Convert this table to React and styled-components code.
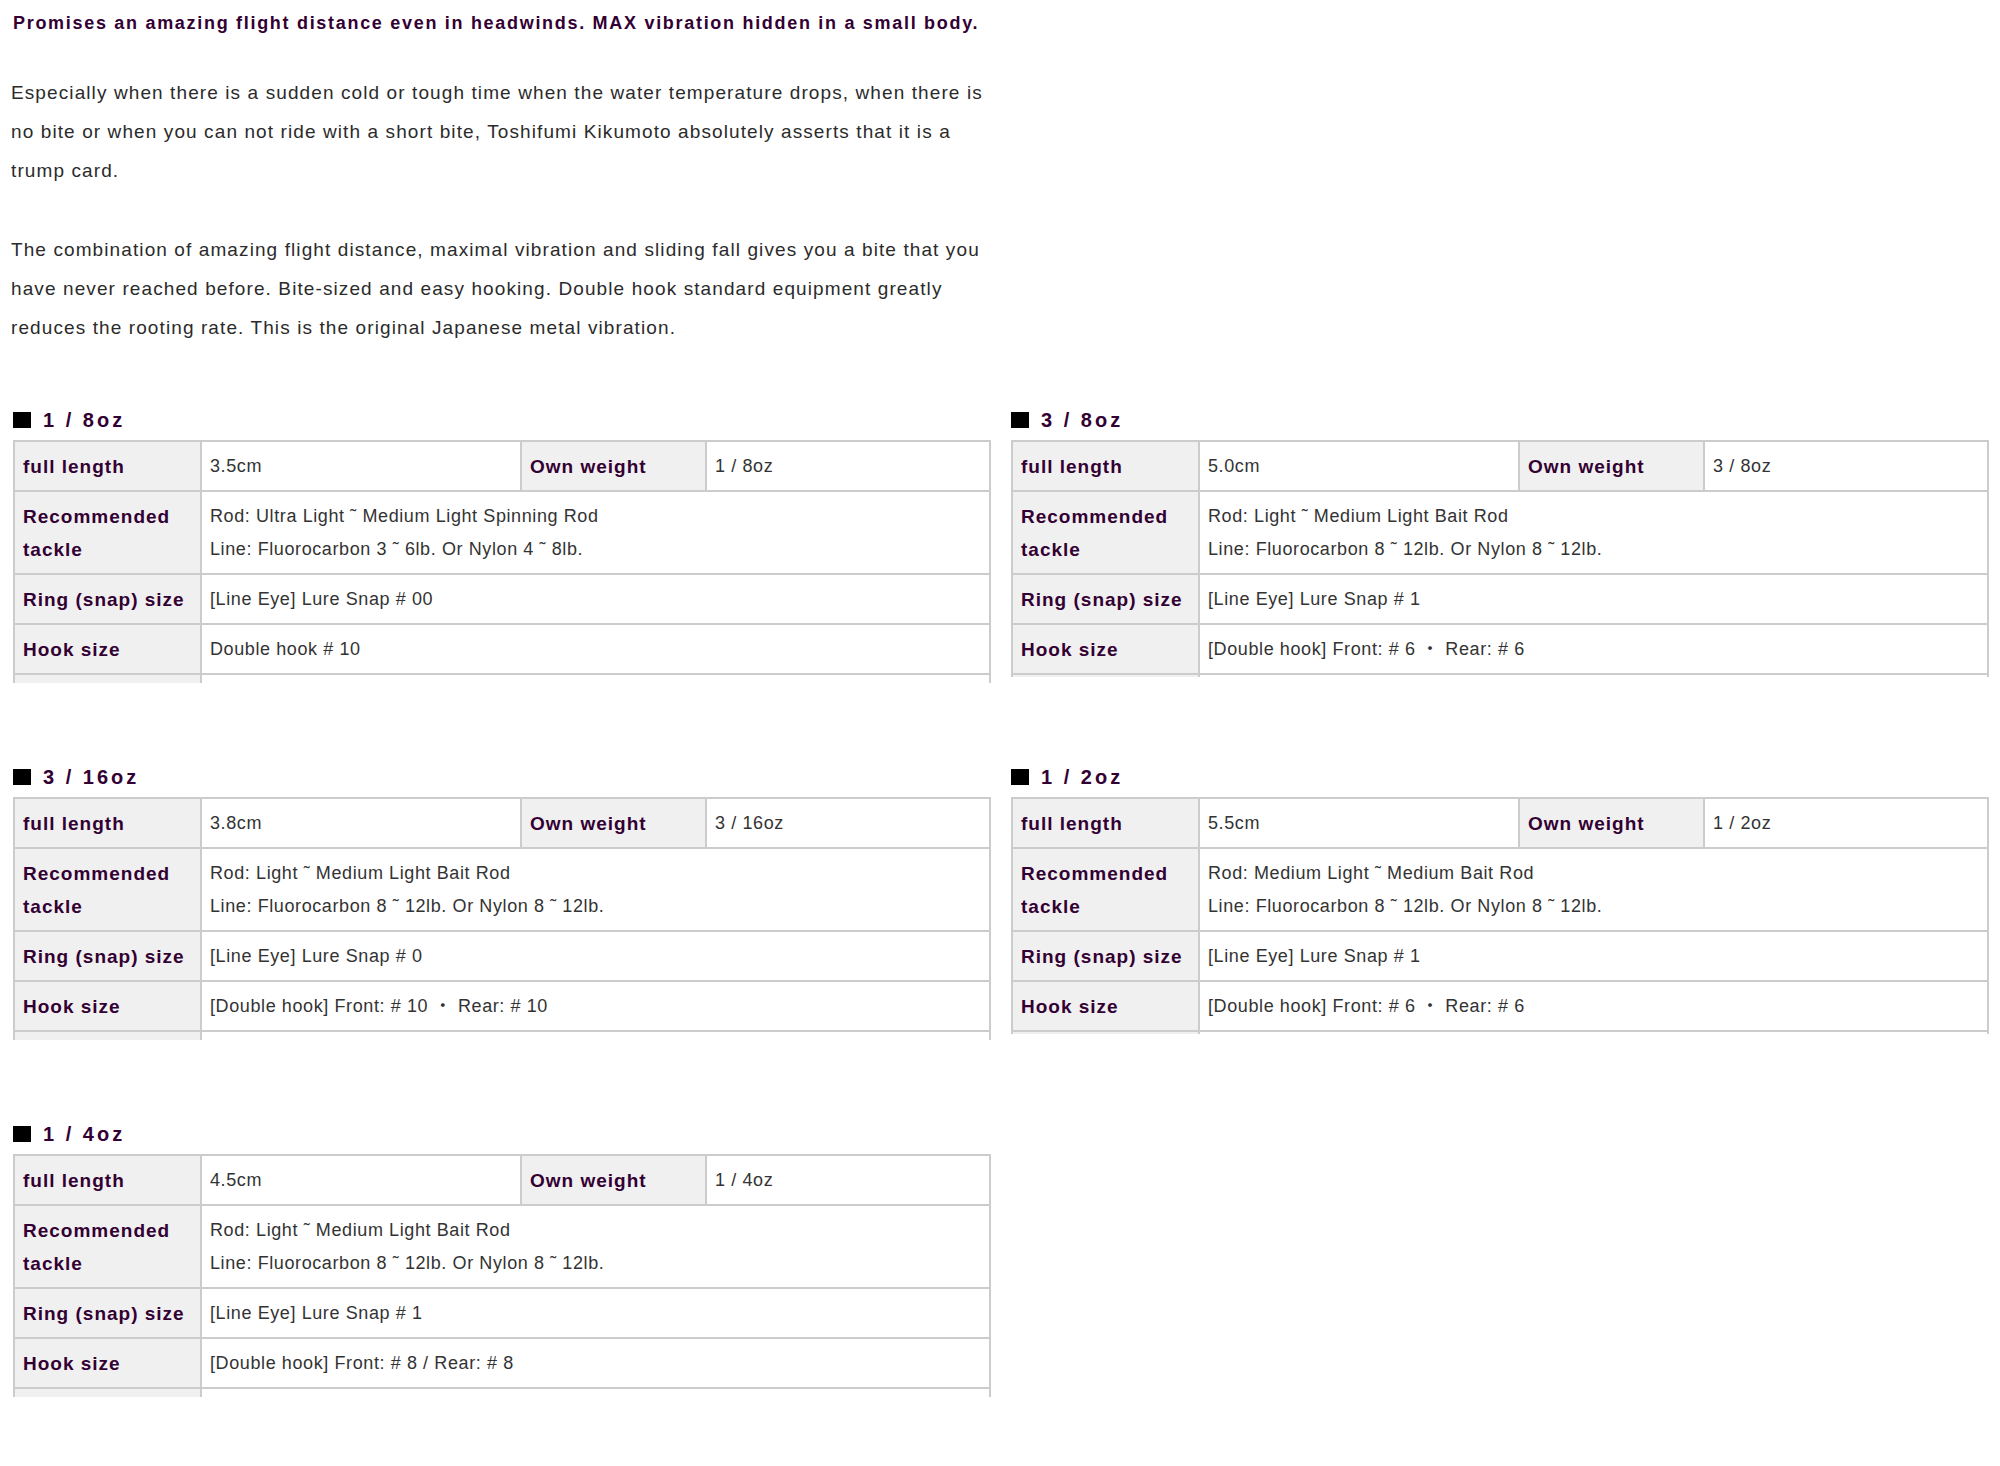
import React from "react";
import styled, { createGlobalStyle } from "styled-components";

const specs = [
	{
		title: "1 / 8oz",
		length: "3.5cm",
		weight: "1 / 8oz",
		rod: "Rod: Ultra Light ˜ Medium Light Spinning Rod",
		line: "Line: Fluorocarbon 3 ˜ 6lb. Or Nylon 4 ˜ 8lb.",
		ring: "[Line Eye] Lure Snap # 00",
		hook: "Double hook # 10",
		side: "left",
	},
	{
		title: "3 / 8oz",
		length: "5.0cm",
		weight: "3 / 8oz",
		rod: "Rod: Light ˜ Medium Light Bait Rod",
		line: "Line: Fluorocarbon 8 ˜ 12lb. Or Nylon 8 ˜ 12lb.",
		ring: "[Line Eye] Lure Snap # 1",
		hook: "[Double hook] Front: # 6 ・ Rear: # 6",
		side: "right",
	},
	{
		title: "3 / 16oz",
		length: "3.8cm",
		weight: "3 / 16oz",
		rod: "Rod: Light ˜ Medium Light Bait Rod",
		line: "Line: Fluorocarbon 8 ˜ 12lb. Or Nylon 8 ˜ 12lb.",
		ring: "[Line Eye] Lure Snap # 0",
		hook: "[Double hook] Front: # 10 ・ Rear: # 10",
		side: "left",
	},
	{
		title: "1 / 2oz",
		length: "5.5cm",
		weight: "1 / 2oz",
		rod: "Rod: Medium Light ˜ Medium Bait Rod",
		line: "Line: Fluorocarbon 8 ˜ 12lb. Or Nylon 8 ˜ 12lb.",
		ring: "[Line Eye] Lure Snap # 1",
		hook: "[Double hook] Front: # 6 ・ Rear: # 6",
		side: "right",
	},
	{
		title: "1 / 4oz",
		length: "4.5cm",
		weight: "1 / 4oz",
		rod: "Rod: Light ˜ Medium Light Bait Rod",
		line: "Line: Fluorocarbon 8 ˜ 12lb. Or Nylon 8 ˜ 12lb.",
		ring: "[Line Eye] Lure Snap # 1",
		hook: "[Double hook] Front: # 8 / Rear: # 8",
		side: "left",
	},
];

export default function App() {
	return (
		<>
			<GlobalStyle />
			<Page>
				<Headline>
					Promises an amazing flight distance even in headwinds. MAX vibration hidden in a small body.
				</Headline>
				<Paragraph>
					Especially when there is a sudden cold or tough time when the water temperature drops, when there is
					<br />
					no bite or when you can not ride with a short bite, Toshifumi Kikumoto absolutely asserts that it is a
					<br />
					trump card.
				</Paragraph>
				<Paragraph>
					The combination of amazing flight distance, maximal vibration and sliding fall gives you a bite that you
					<br />
					have never reached before. Bite-sized and easy hooking. Double hook standard equipment greatly
					<br />
					reduces the rooting rate. This is the original Japanese metal vibration.
				</Paragraph>

				<SpecGrid>
					{specs.map((s) => (
						<SpecBlock key={s.title}>
							<SpecTitle>
								<Square />
								{s.title}
							</SpecTitle>
							<TableClip $side={s.side}>
								<SpecTable>
									<colgroup>
										<col style={{ width: 187 }} />
										<col style={{ width: 320 }} />
										<col style={{ width: 185 }} />
										<col />
									</colgroup>
									<tbody>
										<tr>
											<Label>full length</Label>
											<Value>{s.length}</Value>
											<Label>Own weight</Label>
											<Value>{s.weight}</Value>
										</tr>
										<tr>
											<Label>
												Recommended
												<br />
												tackle
											</Label>
											<Value colSpan={3}>
												{s.rod}
												<br />
												{s.line}
											</Value>
										</tr>
										<tr>
											<Label>Ring (snap) size</Label>
											<Value colSpan={3}>{s.ring}</Value>
										</tr>
										<tr>
											<Label>Hook size</Label>
											<Value colSpan={3}>{s.hook}</Value>
										</tr>
										<tr>
											<Label>&nbsp;</Label>
											<Value colSpan={3}>&nbsp;</Value>
										</tr>
									</tbody>
								</SpecTable>
							</TableClip>
						</SpecBlock>
					))}
				</SpecGrid>
			</Page>
		</>
	);
}

const GlobalStyle = createGlobalStyle`
	html, body {
		margin: 0;
		padding: 0;
		background: #ffffff;
	}
	body {
		font-family: "Liberation Sans", "Noto Sans CJK JP", sans-serif;
		color: #333333;
	}
`;

const Page = styled.div`
	width: 2000px;
	min-height: 1466px;
	padding: 8px 0 0 11px;
	box-sizing: border-box;
`;

const Headline = styled.p`
	margin: 0 0 0 2px;
	font-size: 18px;
	line-height: 30px;
	font-weight: bold;
	letter-spacing: 1.7px;
	color: #330033;
`;

const Paragraph = styled.p`
	margin: 35px 0 0;
	font-size: 19px;
	line-height: 39px;
	letter-spacing: 1.1px;
	color: #2b2b2b;
	& + & {
		margin-top: 40px;
	}
`;

const SpecGrid = styled.div`
	display: grid;
	grid-template-columns: 978px 978px;
	column-gap: 20px;
	row-gap: 77px;
	margin-top: 56px;
	padding-left: 2px;
`;

const SpecBlock = styled.section`
	display: flex;
	flex-direction: column;
`;

const SpecTitle = styled.h3`
	display: flex;
	align-items: center;
	height: 30px;
	margin: 2px 0 5px;
	font-size: 20px;
	font-weight: bold;
	letter-spacing: 3px;
	color: #330033;
`;

const Square = styled.span`
	display: inline-block;
	width: 18px;
	height: 16px;
	margin-right: 12px;
	background: #000000;
`;

const TableClip = styled.div`
	height: ${(p) => (p.$side === "left" ? "243px" : "237px")};
	overflow: hidden;
`;

const SpecTable = styled.table`
	width: 100%;
	table-layout: fixed;
	border-collapse: collapse;
	border: 2px solid #cccccc;
`;

const Label = styled.th`
	padding: 8px 6px 7px 8px;
	border: 2px solid #cccccc;
	background: #f0f0f0;
	text-align: left;
	vertical-align: middle;
	font-size: 19px;
	line-height: 33px;
	font-weight: bold;
	letter-spacing: 1px;
	white-space: nowrap;
	color: #330033;
`;

const Value = styled.td`
	padding: 8px 8px 7px;
	border: 2px solid #cccccc;
	background: #ffffff;
	vertical-align: middle;
	font-size: 18px;
	line-height: 33px;
	letter-spacing: 0.6px;
	color: #333333;
`;
